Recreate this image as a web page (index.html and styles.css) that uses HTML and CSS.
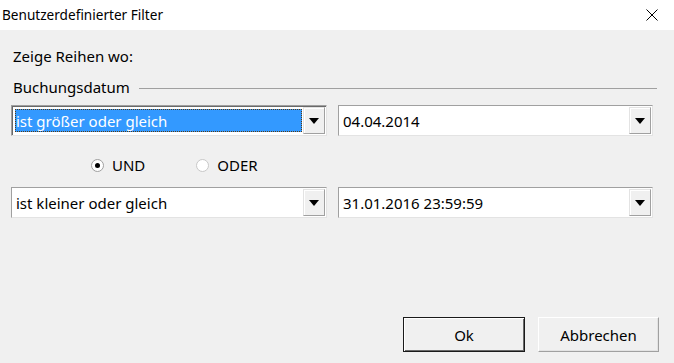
FILE: index.html
```html
<!DOCTYPE html>
<html lang="de">
<head>
<meta charset="utf-8">
<title>Benutzerdefinierter Filter</title>
<link rel="stylesheet" href="styles.css">
</head>
<body>
<div class="dialog">
  <div class="titlebar">
    <span class="title">Benutzerdefinierter Filter</span>
    <svg class="close" width="12" height="12" viewBox="0 0 12 12" aria-label="Schließen">
      <path d="M0.5 0.5 L11.5 11.5 M11.5 0.5 L0.5 11.5" stroke="#000" stroke-width="1" fill="none"/>
    </svg>
  </div>
  <div class="content">
    <div class="label">Zeige Reihen wo:</div>
    <div class="group-header">
      <span class="group-title">Buchungsdatum</span>
      <span class="group-line"></span>
    </div>
    <div class="combo-row row1">
      <div class="combo focused">
        <div class="combo-field"><span class="selected">ist größer oder gleich</span></div>
        <div class="combo-btn"><svg width="10" height="6" viewBox="0 0 10 6"><polygon points="0,0 10,0 5,6" fill="#000"/></svg></div>
      </div>
      <div class="combo">
        <div class="combo-field"><span class="value">04.04.2014</span></div>
        <div class="combo-btn"><svg width="10" height="6" viewBox="0 0 10 6"><polygon points="0,0 10,0 5,6" fill="#000"/></svg></div>
      </div>
    </div>
    <div class="radio-row">
      <label class="radio"><span class="circle checked"></span><span>UND</span></label>
      <label class="radio"><span class="circle"></span><span>ODER</span></label>
    </div>
    <div class="combo-row row2">
      <div class="combo">
        <div class="combo-field"><span class="value">ist kleiner oder gleich</span></div>
        <div class="combo-btn"><svg width="10" height="6" viewBox="0 0 10 6"><polygon points="0,0 10,0 5,6" fill="#000"/></svg></div>
      </div>
      <div class="combo">
        <div class="combo-field"><span class="value">31.01.2016 23:59:59</span></div>
        <div class="combo-btn"><svg width="10" height="6" viewBox="0 0 10 6"><polygon points="0,0 10,0 5,6" fill="#000"/></svg></div>
      </div>
    </div>
    <div class="buttons">
      <button class="btn default">Ok</button>
      <button class="btn">Abbrechen</button>
    </div>
  </div>
</div>
</body>
</html>
```

FILE: styles.css
```css
* { box-sizing: border-box; }

html, body {
  margin: 0;
  padding: 0;
}

body {
  width: 674px;
  height: 363px;
  overflow: hidden;
  background: #f0f0f0;
  font-family: "Noto Sans", "Open Sans", sans-serif;
  font-size: 15px;
  color: #000;
}

.dialog {
  display: flex;
  flex-direction: column;
  height: 363px;
}

.titlebar {
  height: 30px;
  background: #fff;
  display: flex;
  align-items: center;
  justify-content: space-between;
  padding: 0 16px 0 2px;
  flex: none;
}

.title {
  font-size: 13.6px;
  line-height: 20px;
}

.close {
  display: block;
}

.content {
  flex: 1;
  display: flex;
  flex-direction: column;
  padding: 0 0 11px 11px;
}

.label {
  margin-top: 16px;
  padding-left: 2px;
  line-height: 20px;
}

.group-header {
  margin-top: 11px;
  display: flex;
  align-items: center;
  padding-left: 2px;
  padding-right: 17px;
  line-height: 20px;
}

.group-title {
  flex: none;
}

.group-line {
  flex: 1;
  height: 0;
  border-top: 1px solid #a0a0a0;
  margin-left: 9px;
  margin-top: 2px;
}

.combo-row {
  display: grid;
  grid-template-columns: 316px 315px;
  column-gap: 11px;
}

.row1 {
  margin-top: 8px;
}

.row2 {
  margin-top: 12px;
}

.combo {
  height: 31px;
  display: flex;
  background: #fff;
  border: 1px solid;
  border-color: #a0a0a0 #e3e3e3 #e3e3e3 #a0a0a0;
  padding: 1px;
}

.combo.focused {
  box-shadow: inset 1px 1px 0 #696969;
}

.combo-field {
  flex: 1;
  display: flex;
  align-items: center;
  padding: 1px 2px 1px 2px;
  min-width: 0;
}

.combo.focused .combo-field {
  padding: 2px 1px 2px 2px;
}

.value {
  padding-left: 1px;
  white-space: nowrap;
}

.selected {
  flex: 1;
  align-self: stretch;
  display: flex;
  align-items: center;
  background: #3399ff;
  color: #fff;
  outline: 1px dotted #5a3a10;
  outline-offset: -1px;
  padding-left: 1px;
  white-space: nowrap;
}

.combo-btn {
  flex: none;
  width: 22px;
  display: flex;
  align-items: center;
  justify-content: center;
  background: #f0f0f0;
  border-top: 1px solid #e3e3e3;
  border-left: 1px solid #e3e3e3;
  border-right: 1px solid #a0a0a0;
  border-bottom: 1px solid #a0a0a0;
  box-shadow: inset 1px 1px 0 #fff;
}

.combo-btn svg {
  display: block;
}

.radio-row {
  margin-top: 19px;
  display: flex;
  align-items: center;
  padding-left: 80px;
  gap: 51px;
  line-height: 20px;
}

.radio {
  display: flex;
  align-items: center;
  gap: 8px;
}

.circle {
  width: 13px;
  height: 13px;
  border-radius: 50%;
  background: #fff;
  border: 1px solid #c8c8c8;
  display: flex;
  align-items: center;
  justify-content: center;
}

.circle.checked {
  border-color: #a0a0a0;
}

.circle.checked::after {
  content: "";
  width: 5px;
  height: 5px;
  border-radius: 50%;
  background: #000;
}

.buttons {
  margin-top: auto;
  display: flex;
  justify-content: flex-end;
  gap: 13px;
  padding-right: 15px;
}

.btn {
  font-family: inherit;
  font-size: 15px;
  color: #000;
  width: 122px;
  height: 35px;
  background: #f0f0f0;
  border: 1px solid;
  border-color: #fff #a0a0a0 #a0a0a0 #fff;
  box-shadow: inset -1px -1px 0 #e3e3e3;
  padding: 0;
  margin: 0;
}

.btn + .btn {
  width: 121px;
}

.btn.default {
  border: 1px solid #1a1a1a;
  box-shadow: inset 1px 1px 0 #fff, inset -1px -1px 0 #696969;
}
```
